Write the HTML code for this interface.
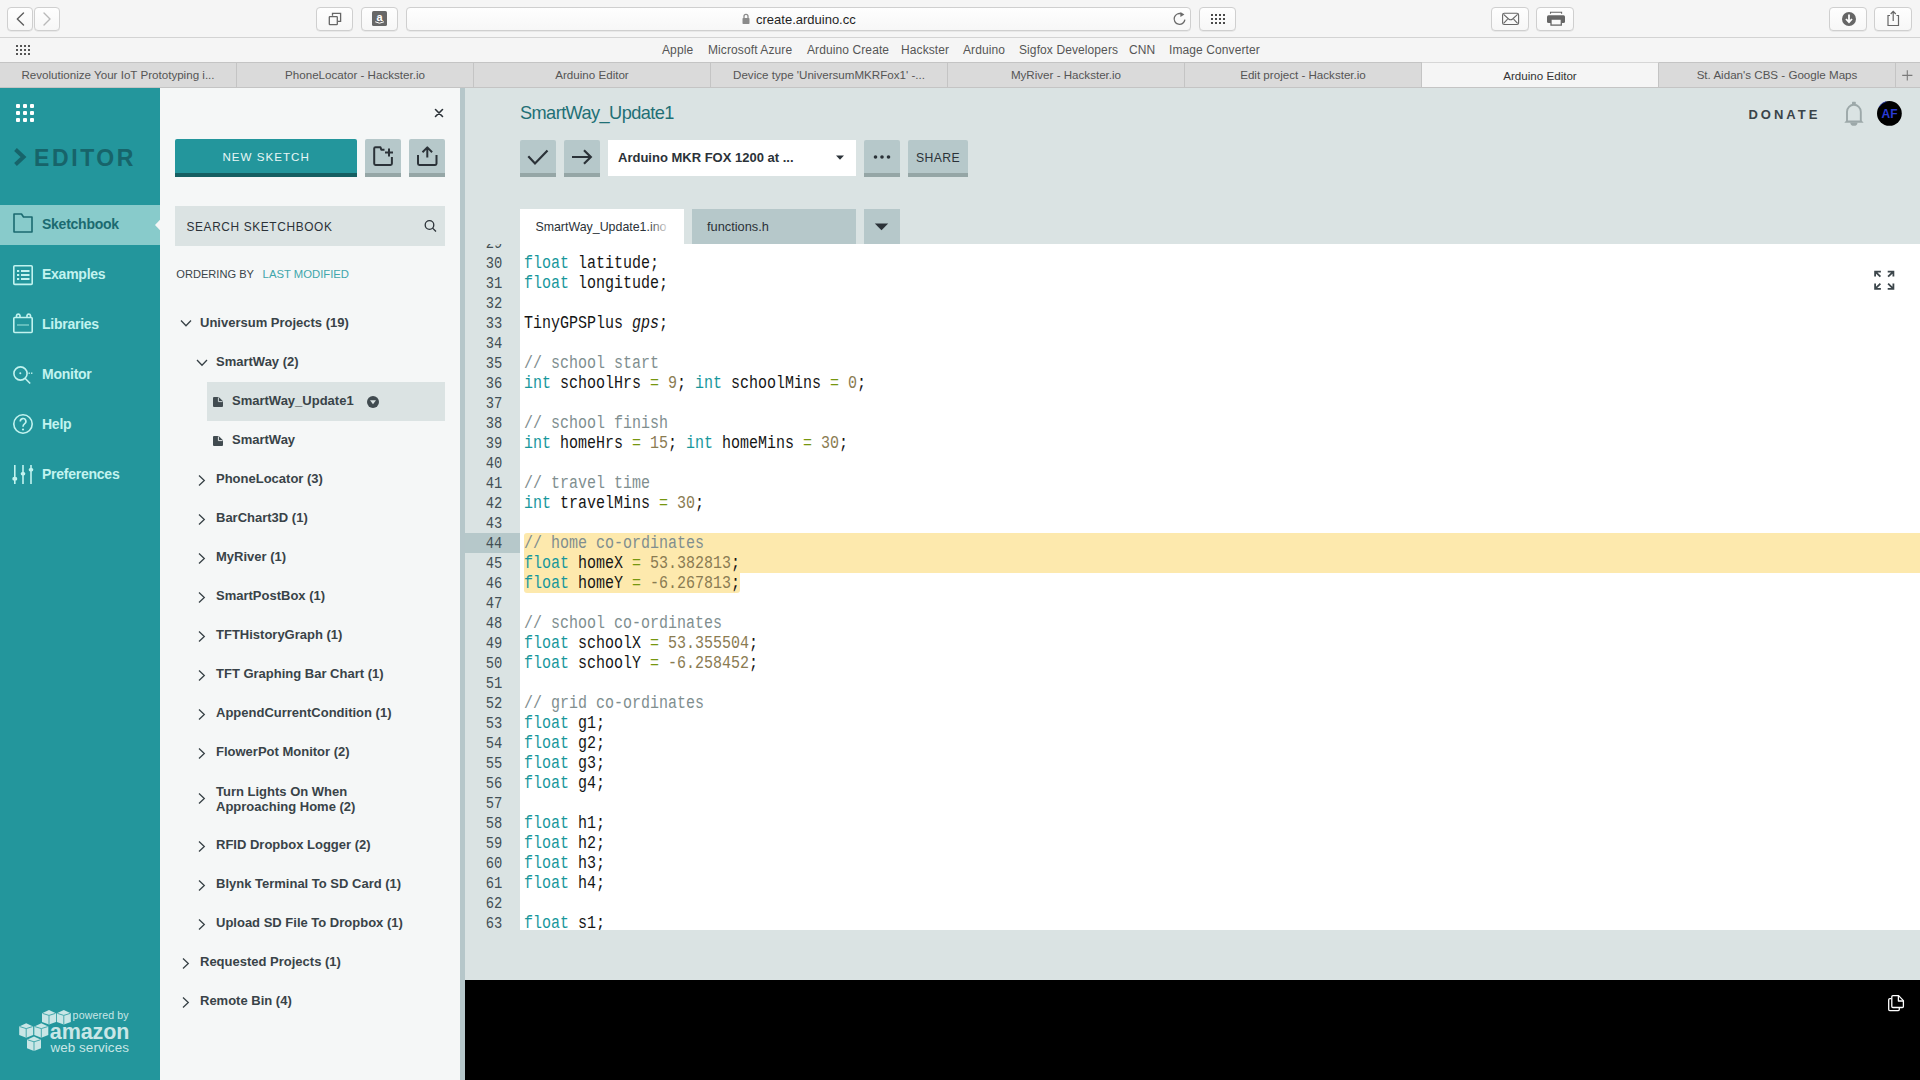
<!DOCTYPE html>
<html><head><meta charset="utf-8">
<style>
*{margin:0;padding:0;box-sizing:border-box}
html,body{width:1920px;height:1080px;overflow:hidden;background:#f5f5f5;font-family:"Liberation Sans",sans-serif}
.a{position:absolute}
/* browser chrome */
#toolbar{left:0;top:0;width:1920px;height:38px;background:#f5f5f5;border-bottom:1px solid #d3d3d3}
.btn{position:absolute;top:7px;height:24px;border:1px solid #cfcfcf;border-radius:4px;background:linear-gradient(#fefefe,#f7f7f7);box-shadow:0 0.5px 0 #dcdcdc}
#bmbar{left:0;top:38px;width:1920px;height:24px;background:#f5f5f5}
.bm{position:absolute;top:43px;font-size:12px;color:#555;white-space:nowrap;letter-spacing:0.1px}
#tabs{left:0;top:62px;width:1920px;height:26px;background:#dadada;border-top:1px solid #c4c4c4;border-bottom:1px solid #c4c4c4}
.tab{position:absolute;top:0;height:24px;line-height:24px;font-size:11.6px;color:#555;text-align:center;border-right:1px solid #c4c4c4;white-space:nowrap}
/* app */
#side{left:0;top:88px;width:160px;height:992px;background:#23969c}
.nav{left:42px;font:bold 14px "Liberation Sans",sans-serif;color:#c2f3ef;line-height:18px;letter-spacing:-0.25px}
#panel{left:160px;top:88px;width:300px;height:992px;background:#f5f7f7}
#div1{left:460px;top:88px;width:5px;height:992px;background:#b6c7ca}
#head{left:465px;top:88px;width:1455px;height:892px;background:#dae3e3}
#console{left:465px;top:980px;width:1455px;height:100px;background:#000}
#gutter{left:465px;top:244px;width:55px;height:686px;background:#dae3e3}
#code{left:520px;top:244px;width:1400px;height:686px;background:#fff}
#gutter{overflow:hidden}
#code{overflow:hidden}
pre{position:absolute;font-family:"Liberation Mono",monospace;font-size:18px;line-height:20px;white-space:pre;transform:scaleX(0.8333)}
#nums{right:18px;top:-10.5px;text-align:right;color:#434f54;transform-origin:100% 0;font-size:16px;transform:scaleX(0.86)}
#src{left:4px;top:-11px;color:#151515;transform-origin:0 0}
.k{color:#17979c}.c{color:#808e8f}.n{color:#8a7b52}.o{color:#76960f}
i{font-style:italic}
</style></head><body>
<div id="toolbar" class="a"></div>
<div class="btn" style="left:7px;width:26px"></div>
<div class="btn" style="left:34px;width:26px"></div>
<svg class="a" style="left:0;top:0" width="1920" height="37">
 <g fill="none" stroke-width="1.4" stroke-linecap="round" stroke-linejoin="round">
  <path d="M23.5 13 L17.3 19 L23.5 25" stroke="#5e5e5e"/>
  <path d="M44 13 L50 19 L44 25" stroke="#b9b9b9"/>
 </g>
</svg>
<div class="btn" style="left:316px;width:37px"></div>
<div class="btn" style="left:361px;width:37px"></div>
<div class="btn" style="left:406px;width:785px"></div>
<div class="btn" style="left:1199px;width:37px"></div>
<div class="btn" style="left:1491px;width:38px"></div>
<div class="btn" style="left:1536px;width:38px"></div>
<div class="btn" style="left:1829px;width:38px"></div>
<div class="btn" style="left:1874px;width:38px"></div>
<svg class="a" style="left:0;top:0" width="1920" height="37">
 <!-- tab overview -->
 <g fill="none" stroke="#666" stroke-width="1.3">
  <path d="M332.5 15.7 V13.3 H340.6 V21.4 H338"/>
  <rect x="329.3" y="16.6" width="8" height="8" rx="0.6"/>
 </g>
 <!-- amazon -->
 <rect x="372" y="11" width="15" height="15" rx="1.6" fill="#676767"/>
 <text x="379.5" y="21.3" font-family="Liberation Sans" font-weight="bold" font-size="11" fill="#fff" text-anchor="middle">a</text>
 <path d="M375.2 21.8 Q379.5 24.6 384 21.8" fill="none" stroke="#fff" stroke-width="1"/>
 <!-- lock -->
 <rect x="742.5" y="18" width="7" height="6" rx="0.8" fill="#8a8a8a"/>
 <path d="M744 18 V16.3 A2 2 0 0 1 748 16.3 V18" fill="none" stroke="#8a8a8a" stroke-width="1.3"/>
 <!-- reload -->
 <path d="M1184.9 19.6 A5.4 5.4 0 1 1 1181.7 14" fill="none" stroke="#6a6a6a" stroke-width="1.3"/>
 <path d="M1180.4 12 L1184.4 14.5 L1180.4 17 Z" fill="#6a6a6a"/>
 <!-- grid -->
 <g fill="#4a4a4a">
  <rect x="1211" y="14" width="2" height="2"/><rect x="1215" y="14" width="2" height="2"/><rect x="1219" y="14" width="2" height="2"/><rect x="1223" y="14" width="2" height="2"/>
  <rect x="1211" y="18" width="2" height="2"/><rect x="1215" y="18" width="2" height="2"/><rect x="1219" y="18" width="2" height="2"/><rect x="1223" y="18" width="2" height="2"/>
  <rect x="1211" y="22" width="2" height="2"/><rect x="1215" y="22" width="2" height="2"/><rect x="1219" y="22" width="2" height="2"/><rect x="1223" y="22" width="2" height="2"/>
 </g>
 <!-- mail -->
 <g fill="none" stroke="#666" stroke-width="1.1">
  <rect x="1502.6" y="13.3" width="16" height="11.2" rx="1.6"/>
  <path d="M1503.6 14.3 L1508.6 19 Q1510.6 20.6 1512.6 19 L1517.6 14.3 M1503.6 23.4 L1507.6 19.2 M1517.6 23.4 L1513.6 19.2"/>
 </g>
 <!-- print -->
 <path d="M1550.5 13.8 V12.2 H1561.6 V13.8" fill="none" stroke="#666" stroke-width="1.1"/>
 <rect x="1547" y="15.3" width="18" height="7.6" rx="1.5" fill="#666"/>
 <rect x="1551" y="19.1" width="10.3" height="6" fill="#fafafa" stroke="#666" stroke-width="1.3"/>
 <!-- download -->
 <circle cx="1849" cy="19" r="7" fill="#666"/>
 <path d="M1849 14.5 V22 M1846 19 L1849 22.2 L1852 19" fill="none" stroke="#fff" stroke-width="1.8"/>
 <!-- share -->
 <g fill="none" stroke="#666" stroke-width="1.2">
  <path d="M1890 15.5 H1888 V25.5 H1898.5 V15.5 H1896.5"/>
  <path d="M1893.2 21 V11.5 M1890.7 14 L1893.2 11.4 L1895.8 14"/>
 </g>
</svg>
<div class="a" style="left:756px;top:12px;font-size:13px;color:#1f1f1f;white-space:nowrap">create.arduino.cc</div>
<div id="bmbar" class="a"></div>
<svg class="a" style="left:0;top:38px" width="40" height="24">
 <g fill="#555">
  <rect x="16" y="7" width="2" height="2"/><rect x="20" y="7" width="2" height="2"/><rect x="24" y="7" width="2" height="2"/><rect x="28" y="7" width="2" height="2"/>
  <rect x="16" y="11" width="2" height="2"/><rect x="20" y="11" width="2" height="2"/><rect x="24" y="11" width="2" height="2"/><rect x="28" y="11" width="2" height="2"/>
  <rect x="16" y="15" width="2" height="2"/><rect x="20" y="15" width="2" height="2"/><rect x="24" y="15" width="2" height="2"/><rect x="28" y="15" width="2" height="2"/>
 </g>
</svg>
<div class="bm" style="left:662px">Apple</div>
<div class="bm" style="left:708px">Microsoft Azure</div>
<div class="bm" style="left:807px">Arduino Create</div>
<div class="bm" style="left:901px">Hackster</div>
<div class="bm" style="left:963px">Arduino</div>
<div class="bm" style="left:1019px">Sigfox Developers</div>
<div class="bm" style="left:1129px">CNN</div>
<div class="bm" style="left:1169px">Image Converter</div>
<div id="tabs" class="a">
 <div class="tab" style="left:0;width:237px">Revolutionize Your IoT Prototyping i...</div>
 <div class="tab" style="left:237px;width:237px">PhoneLocator - Hackster.io</div>
 <div class="tab" style="left:474px;width:237px">Arduino Editor</div>
 <div class="tab" style="left:711px;width:237px">Device type 'UniversumMKRFox1' -...</div>
 <div class="tab" style="left:948px;width:237px">MyRiver - Hackster.io</div>
 <div class="tab" style="left:1185px;width:237px">Edit project - Hackster.io</div>
 <div class="tab" style="left:1422px;width:237px;background:#f5f5f5;color:#333;top:-1px;height:25px;line-height:26px;border-top:1px solid #d6d6d6">Arduino Editor</div>
 <div class="tab" style="left:1659px;width:237px">St. Aidan's CBS - Google Maps</div>
 <div class="tab" style="left:1896px;width:24px;border-right:none"></div><svg class="a" style="left:1896px;top:0" width="24" height="24"><path d="M11.3 7.3 V17.5 M6.2 12.4 H16.4" stroke="#7a7a7a" stroke-width="1.1"/></svg>
</div>
<div id="side" class="a"></div>
<svg class="a" style="left:0;top:88px" width="160" height="992" viewBox="0 88 160 992">
 <g fill="#fff">
  <rect x="16" y="104" width="4" height="4" rx="1"/><rect x="23" y="104" width="4" height="4" rx="1"/><rect x="30" y="104" width="4" height="4" rx="1"/>
  <rect x="16" y="111" width="4" height="4" rx="1"/><rect x="23" y="111" width="4" height="4" rx="1"/><rect x="30" y="111" width="4" height="4" rx="1"/>
  <rect x="16" y="118" width="4" height="4" rx="1"/><rect x="23" y="118" width="4" height="4" rx="1"/><rect x="30" y="118" width="4" height="4" rx="1"/>
 </g>
 <path d="M15.5 149.5 L23.5 157 L15.5 164.5" fill="none" stroke="#17646a" stroke-width="4" stroke-linejoin="miter"/>
 <rect x="0" y="205" width="160" height="40" fill="#88cbcb"/>
 <path d="M155 225 L160 219.7 L160 230.3 Z" fill="#f5f7f7"/>
 <!-- folder -->
 <path d="M14 214 H21.5 L23.5 217 H32 V232 H14 Z" fill="none" stroke="#1b6a70" stroke-width="1.6" stroke-linejoin="round"/>
 <g fill="none" stroke="#c2f3ef" stroke-width="1.6">
  <!-- examples -->
  <rect x="13.8" y="265.8" width="18.4" height="18.6" rx="1"/>
  <!-- libraries -->
  <rect x="13.8" y="317.5" width="18.4" height="15" rx="1"/>
  <path d="M16.5 317 V315.5 A1.8 1.8 0 0 1 20 315.5 V317 M27 317 V315.5 A1.8 1.8 0 0 1 30.5 315.5 V317"/>
  <!-- monitor -->
  <circle cx="20.5" cy="373.5" r="6.6"/>
  <path d="M25 378.2 L30.2 383.5"/>
  <!-- help -->
  <circle cx="23" cy="424" r="9.2"/>
  <path d="M20.3 421.5 A2.8 2.8 0 1 1 24.5 423.8 Q23 424.8 23 426.8"/>
  <!-- prefs -->
  <path d="M14.8 465 V484 M23 465 V484 M31 465 V484"/>
 </g>
 <path d="M17 325 H29" stroke="#7fcfcb" stroke-width="1.4"/>
 <g fill="#c2f3ef">
  <rect x="17" y="270" width="2.2" height="2"/><rect x="21" y="270" width="8.5" height="2"/>
  <rect x="17" y="274" width="2.2" height="2"/><rect x="21" y="274" width="8.5" height="2"/>
  <rect x="17" y="278" width="2.2" height="2"/><rect x="21" y="278" width="8.5" height="2"/>
  <circle cx="20.3" cy="373.2" r="1"/>
  <rect x="28.5" y="372.5" width="1.4" height="1.4"/><rect x="31" y="372.5" width="1.4" height="1.4"/>
  <circle cx="23" cy="429.5" r="1.1"/>
  <rect x="12.5" y="477" width="4.6" height="3.4" rx="1.2"/>
  <rect x="20.7" y="472" width="4.6" height="3.4" rx="1.7"/>
  <rect x="28.7" y="468" width="4.6" height="3.4" rx="1.7"/>
 </g>
</svg>
<div class="a" style="left:34px;top:145px;font:bold 23px 'Liberation Sans',sans-serif;color:#17646a;letter-spacing:2.6px">EDITOR</div>
<div class="nav a" style="top:215px;color:#1b6a70">Sketchbook</div>
<div class="nav a" style="top:265px">Examples</div>
<div class="nav a" style="top:315px">Libraries</div>
<div class="nav a" style="top:365px">Monitor</div>
<div class="nav a" style="top:415px">Help</div>
<div class="nav a" style="top:465px">Preferences</div>
<svg class="a" style="left:0;top:1000px" width="160" height="60" viewBox="0 1000 160 60"><path d="M42 1013.3000000000001 L49.0 1010.1 L56 1013.3000000000001 V1021.8999999999999 L49.0 1024.6 L42 1021.8999999999999 Z" fill="#c9e6e6"/><path d="M42.6 1013.4 L49.0 1015.4 L55.4 1013.4 M49.0 1015.4 V1024.6" fill="none" stroke="#46a9ad" stroke-width="1"/><path d="M56.8 1013.3000000000001 L63.8 1010.1 L70.8 1013.3000000000001 V1021.8999999999999 L63.8 1024.6 L56.8 1021.8999999999999 Z" fill="#c9e6e6"/><path d="M57.4 1013.4 L63.8 1015.4 L70.2 1013.4 M63.8 1015.4 V1024.6" fill="none" stroke="#46a9ad" stroke-width="1"/><path d="M19.2 1026.5 L26.2 1023.3 L33.2 1026.5 V1035.1 L26.2 1037.8 L19.2 1035.1 Z" fill="#c9e6e6"/><path d="M19.8 1026.6 L26.2 1028.6 L32.6 1026.6 M26.2 1028.6 V1037.8" fill="none" stroke="#46a9ad" stroke-width="1"/><path d="M34.3 1026.5 L41.3 1023.3 L48.3 1026.5 V1035.1 L41.3 1037.8 L34.3 1035.1 Z" fill="#c9e6e6"/><path d="M34.9 1026.6 L41.3 1028.6 L47.699999999999996 1026.6 M41.3 1028.6 V1037.8" fill="none" stroke="#46a9ad" stroke-width="1"/><path d="M27 1039.7 L34.0 1036.5 L41 1039.7 V1048.3 L34.0 1051.0 L27 1048.3 Z" fill="#c9e6e6"/><path d="M27.6 1039.8 L34.0 1041.8 L40.4 1039.8 M34.0 1041.8 V1051.0" fill="none" stroke="#46a9ad" stroke-width="1"/><text x="72.6" y="1018.6" font-family="Liberation Sans" font-size="10.6" letter-spacing="0.14" fill="#c9e6e6">powered by</text><text x="49.8" y="1039.4" font-family="Liberation Sans" font-weight="bold" font-size="21.5" letter-spacing="-0.1" fill="#c9e6e6">amazon</text><text x="50.4" y="1052.2" font-family="Liberation Sans" font-size="13.4" letter-spacing="0.1" fill="#c9e6e6">web services</text></svg>
<div id="panel" class="a"></div>
<div class="a" style="left:175px;top:139px;width:182px;height:38px;background:#23969c;border-bottom:4px solid #155f62;border-radius:2px 2px 0 0"></div>
<div class="a" style="left:365px;top:139px;width:36px;height:38px;background:#b6c8ca;border-bottom:4px solid #95a6a6;border-radius:2px 2px 0 0"></div>
<div class="a" style="left:409px;top:139px;width:36px;height:38px;background:#b6c8ca;border-bottom:4px solid #95a6a6;border-radius:2px 2px 0 0"></div>
<div class="a" style="left:175px;top:206px;width:270px;height:40px;background:#dbe3e3"></div>
<svg class="a" style="left:160px;top:88px" width="300" height="992" viewBox="160 88 300 992">
 <g fill="none" stroke="#2b3238" stroke-width="1.6" stroke-linecap="round">
  <path d="M435.5 109.5 L442.5 116.5 M442.5 109.5 L435.5 116.5"/>
 </g>
 <g fill="none" stroke="#2b3238" stroke-width="2" stroke-linejoin="round">
  <path d="M384.5 149.8 H381.3 L380.5 147.3 H375.5 Q374.2 147.3 374.2 148.6 V163.6 Q374.2 164.9 375.5 164.9 H390.6 Q391.9 164.9 391.9 163.6 V157"/>
  <path d="M389 148.5 V156.5 M385 152.5 H393"/>
  <path d="M418 155 V163.6 Q418 164.9 419.3 164.9 H435.2 Q436.5 164.9 436.5 163.6 V155"/>
  <path d="M427.3 157.5 V147.5 M422.5 152.3 L427.3 147.4 L432.1 152.3"/>
 </g>
 <!-- search icon -->
 <g fill="none" stroke="#2b3238" stroke-width="1.3">
  <circle cx="429.5" cy="225" r="4.3"/>
  <path d="M432.6 228.1 L436 231.5"/>
 </g>
 <text x="222.5" y="161.3" font-family="Liberation Sans" font-size="11.6" letter-spacing="1.0" fill="#e8f6f6">NEW SKETCH</text>
 <text x="186.5" y="231.4" font-family="Liberation Sans" font-size="11.9" letter-spacing="0.62" fill="#2b3238">SEARCH SKETCHBOOK</text>
 <text x="176.3" y="278.2" font-family="Liberation Sans" font-size="11.1" fill="#3a4449">ORDERING BY</text>
 <text x="262.6" y="278.2" font-family="Liberation Sans" font-size="11.3" fill="#3fa6ab">LAST MODIFIED</text>
 <rect x="207" y="382" width="238" height="39" fill="#dbe3e3"/>
 <g font-family="Liberation Sans" font-weight="bold" font-size="13" fill="#394348">
  <text x="200" y="327">Universum Projects (19)</text>
  <text x="216" y="366">SmartWay (2)</text>
  <text x="232" y="405">SmartWay_Update1</text>
  <text x="232" y="444">SmartWay</text>
  <text x="216" y="483">PhoneLocator (3)</text>
  <text x="216" y="522">BarChart3D (1)</text>
  <text x="216" y="561">MyRiver (1)</text>
  <text x="216" y="600">SmartPostBox (1)</text>
  <text x="216" y="639">TFTHistoryGraph (1)</text>
  <text x="216" y="678">TFT Graphing Bar Chart (1)</text>
  <text x="216" y="717">AppendCurrentCondition (1)</text>
  <text x="216" y="756">FlowerPot Monitor (2)</text>
  <text x="216" y="795.5">Turn Lights On When</text>
  <text x="216" y="810.5">Approaching Home (2)</text>
  <text x="216" y="849">RFID Dropbox Logger (2)</text>
  <text x="216" y="888">Blynk Terminal To SD Card (1)</text>
  <text x="216" y="927">Upload SD File To Dropbox (1)</text>
  <text x="200" y="966">Requested Projects (1)</text>
  <text x="200" y="1005">Remote Bin (4)</text>
 </g>
 <g fill="none" stroke="#374146" stroke-width="1.3" stroke-linejoin="miter">
  <path d="M181 320.5 L186 325.8 L191 320.5"/>
  <path d="M197 360 L202 365.3 L207 360"/>
  <path d="M199 475.5 L204.3 480.5 L199 485.5"/>
  <path d="M199 514.5 L204.3 519.5 L199 524.5"/>
  <path d="M199 553.5 L204.3 558.5 L199 563.5"/>
  <path d="M199 592.5 L204.3 597.5 L199 602.5"/>
  <path d="M199 631.5 L204.3 636.5 L199 641.5"/>
  <path d="M199 670.5 L204.3 675.5 L199 680.5"/>
  <path d="M199 709.5 L204.3 714.5 L199 719.5"/>
  <path d="M199 748.5 L204.3 753.5 L199 758.5"/>
  <path d="M199 793.5 L204.3 798.5 L199 803.5"/>
  <path d="M199 841.5 L204.3 846.5 L199 851.5"/>
  <path d="M199 880.5 L204.3 885.5 L199 890.5"/>
  <path d="M199 919.5 L204.3 924.5 L199 929.5"/>
  <path d="M183 958.5 L188.3 963.5 L183 968.5"/>
  <path d="M183 997.5 L188.3 1002.5 L183 1007.5"/>
 </g>
 <g fill="#414b50">
  <path d="M214 397 H218.7 L223 401.3 V406 Q223 407 222 407 H214 Q213 407 213 406 V398 Q213 397 214 397 Z"/><path d="M218.4 397.4 V401.6 H222.6" fill="none" stroke="#dbe3e3" stroke-width="0.9"/>
  <path d="M214 436 H218.7 L223 440.3 V445 Q223 446 222 446 H214 Q213 446 213 445 V437 Q213 436 214 436 Z"/><path d="M218.4 436.4 V440.6 H222.6" fill="none" stroke="#f5f7f7" stroke-width="0.9"/>
  <circle cx="373" cy="402" r="6"/>
 </g>
 <path d="M370 400.3 H376 L373 404.3 Z" fill="#dbe3e3"/>
</svg>
<div id="div1" class="a"></div>
<div id="head" class="a"></div>
<div id="gutter" class="a"><div class="a" style="left:0;top:289px;width:55px;height:20px;background:#b6c8ca"></div><pre id="nums">29
30
31
32
33
34
35
36
37
38
39
40
41
42
43
44
45
46
47
48
49
50
51
52
53
54
55
56
57
58
59
60
61
62
63</pre></div>
<div id="code" class="a"><div class="a" style="left:4px;top:289px;width:1396px;height:40px;background:#fde9ad;border-radius:3px 0 0 0"></div><div class="a" style="left:4px;top:329px;width:216px;height:20px;background:#fde9ad;border-radius:0 0 3px 3px"></div><pre id="src"> 
<span class="k">float</span> latitude;
<span class="k">float</span> longitude;

TinyGPSPlus <i>gps</i>;

<span class="c">// school start</span>
<span class="k">int</span> schoolHrs <span class="o">=</span> <span class="n">9</span>; <span class="k">int</span> schoolMins <span class="o">=</span> <span class="n">0</span>;

<span class="c">// school finish</span>
<span class="k">int</span> homeHrs <span class="o">=</span> <span class="n">15</span>; <span class="k">int</span> homeMins <span class="o">=</span> <span class="n">30</span>;

<span class="c">// travel time</span>
<span class="k">int</span> travelMins <span class="o">=</span> <span class="n">30</span>;

<span class="c">// home co-ordinates</span>
<span class="k">float</span> homeX <span class="o">=</span> <span class="n">53.382813</span>;
<span class="k">float</span> homeY <span class="o">=</span> <span class="n">-6.267813</span>;

<span class="c">// school co-ordinates</span>
<span class="k">float</span> schoolX <span class="o">=</span> <span class="n">53.355504</span>;
<span class="k">float</span> schoolY <span class="o">=</span> <span class="n">-6.258452</span>;

<span class="c">// grid co-ordinates</span>
<span class="k">float</span> g1;
<span class="k">float</span> g2;
<span class="k">float</span> g3;
<span class="k">float</span> g4;

<span class="k">float</span> h1;
<span class="k">float</span> h2;
<span class="k">float</span> h3;
<span class="k">float</span> h4;

<span class="k">float</span> s1;</pre></div>
<div class="a" style="left:520px;top:140px;width:36px;height:37px;background:#b6c8ca;border-bottom:4px solid #95a6a6;border-radius:2px 2px 0 0"></div>
<div class="a" style="left:564px;top:140px;width:36px;height:37px;background:#b6c8ca;border-bottom:4px solid #95a6a6;border-radius:2px 2px 0 0"></div>
<div class="a" style="left:608px;top:140px;width:248px;height:36px;background:#fff"></div>
<div class="a" style="left:864px;top:140px;width:36px;height:37px;background:#b6c8ca;border-bottom:4px solid #95a6a6;border-radius:2px 2px 0 0"></div>
<div class="a" style="left:908px;top:140px;width:60px;height:37px;background:#b6c8ca;border-bottom:4px solid #95a6a6;border-radius:2px 2px 0 0"></div>
<div class="a" style="left:520px;top:209px;width:164px;height:35px;background:#fff"></div>
<div class="a" style="left:692px;top:209px;width:164px;height:35px;background:#b6c8ca"></div>
<div class="a" style="left:864px;top:209px;width:36px;height:35px;background:#b6c8ca"></div>
<svg class="a" style="left:465px;top:88px" width="1455" height="220" viewBox="465 88 1455 220">
 <text x="520" y="119" font-family="Liberation Sans" font-size="18.2" letter-spacing="-0.58" fill="#1f7076">SmartWay_Update1</text>
 <g fill="none" stroke="#2b3238" stroke-width="2.2">
  <path d="M528.3 156.2 L535 163.4 L547.5 150.5"/>
  <path d="M572 157 H590.5 M584 150.3 L590.8 157 L584 163.7"/>
 </g>
 <text x="618" y="162" font-family="Liberation Sans" font-weight="bold" font-size="13" fill="#2b3238">Arduino MKR FOX 1200 at ...</text>
 <path d="M836 155.5 H844 L840 159.7 Z" fill="#2b3238"/>
 <g fill="#2b3238"><circle cx="875.5" cy="157" r="1.8"/><circle cx="882" cy="157" r="1.8"/><circle cx="888.5" cy="157" r="1.8"/></g>
 <text x="916" y="161.7" font-family="Liberation Sans" font-size="12.2" letter-spacing="0.4" fill="#2b3238">SHARE</text>
 <text x="1748.4" y="119.2" font-family="Liberation Sans" font-weight="bold" font-size="13" letter-spacing="3" fill="#3a4449">DONATE</text>
 <g fill="#9ca8a9">
  <path d="M1847 121 V111.7 A6.9 6.9 0 0 1 1860.8 111.7 V121" fill="none" stroke="#9ca8a9" stroke-width="1.9"/>
  <path d="M1844.3 122.8 L1846.3 120.4 H1861.6 L1863.6 122.8 Z"/>
  <rect x="1852" y="101.8" width="3.8" height="2.6" rx="0.6"/>
  <path d="M1850.3 122.5 A3.6 3.4 0 0 0 1857.5 122.5 Z"/>
 </g>
 <circle cx="1889.4" cy="113.4" r="12.4" fill="#000"/>
 <path d="M1879 107 A12.2 12.2 0 0 1 1886 101.6" fill="none" stroke="#2233aa" stroke-width="0.8"/>
 <text x="1889.6" y="118" font-family="Liberation Sans" font-weight="bold" font-size="12" text-anchor="middle" fill="#2a3bd6">AF</text>
 <text x="535.4" y="230.5" font-family="Liberation Sans" font-size="12.4" fill="#2b3238">SmartWay_Update1.ino</text>
 <defs><linearGradient id="fade" x1="0" x2="1"><stop offset="0" stop-color="#fff" stop-opacity="0"/><stop offset="1" stop-color="#fff" stop-opacity="0.85"/></linearGradient></defs>
 <rect x="648" y="215" width="20" height="22" fill="url(#fade)"/>
 <text x="707" y="230.5" font-family="Liberation Sans" font-size="12.8" fill="#2b3238">functions.h</text>
 <path d="M874.8 223.5 H888.2 L881.5 230.3 Z" fill="#2b3238"/>
 <!-- expand -->
 <g fill="none" stroke="#3c464b" stroke-width="1.8">
  <path d="M1875.1 276.6 V271.6 H1880.9 M1875.6 272 L1880.4 276.6"/>
  <path d="M1887.7 271.6 H1893.4 V276.6 M1892.9 272 L1888.1 276.6"/>
  <path d="M1875.1 283.6 V288.8 H1880.9 M1875.6 288.3 L1880.4 283.6"/>
  <path d="M1887.7 288.8 H1893.4 V283.6 M1892.9 288.3 L1888.1 283.6"/>
 </g>
</svg>
<div id="console" class="a"></div>
<svg class="a" style="left:1880px;top:990px" width="30" height="25" viewBox="1880 990 30 25">
 <g fill="none" stroke="#fff" stroke-width="1.3" stroke-linejoin="round">
  <path d="M1891.5 998.6 H1889.8 Q1888.7 998.6 1888.7 999.7 V1009.6 Q1888.7 1010.6 1889.8 1010.6 H1898.2 Q1899.3 1010.6 1899.3 1009.6 V1007.8"/>
  <path d="M1898.6 995.6 H1892.9 Q1891.8 995.6 1891.8 996.7 V1006.4 Q1891.8 1007.5 1892.9 1007.5 H1902.3 Q1903.4 1007.5 1903.4 1006.4 V1000.6 Z"/>
  <path d="M1898.4 995.8 V1001 H1903.3"/>
 </g>
</svg>
</body></html>
